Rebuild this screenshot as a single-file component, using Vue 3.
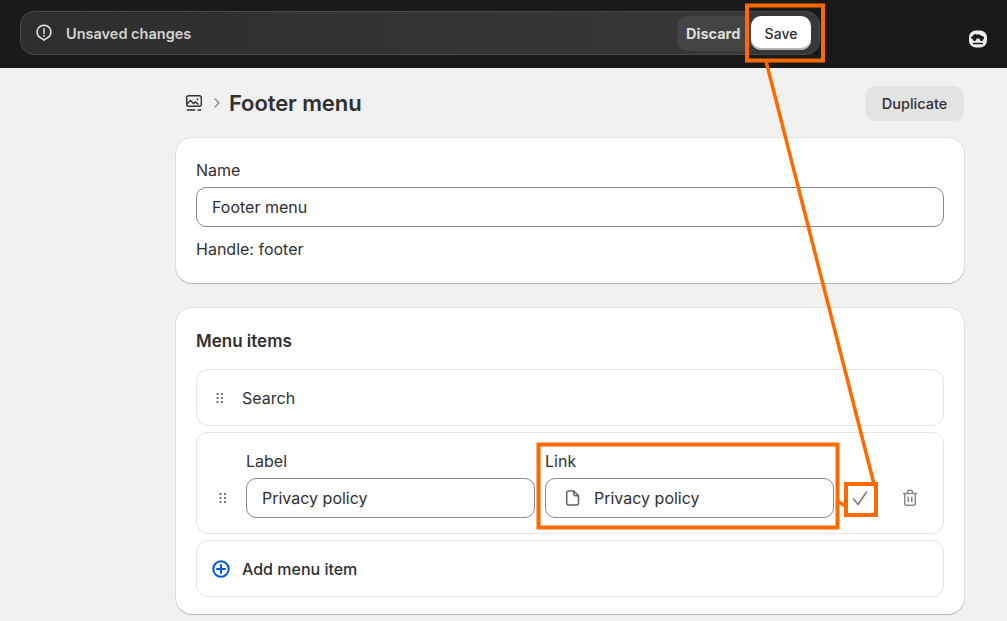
<template>
  <div class="page">
    <header class="topbar">
      <div class="save-bar">
        <svg class="alert-icon" viewBox="0 0 20 20" width="20" height="20" fill="none" stroke="#e3e3e3" stroke-width="1.5">
          <path d="M10 17.2l-1.9-1.5a6.9 6.9 0 1 1 3.8 0z" stroke-linejoin="round" />
          <path d="M10 5.8v4.6" stroke-linecap="round" />
          <circle cx="10" cy="12.9" r=".5" fill="#e3e3e3" stroke-width="1" />
        </svg>
        <span class="unsaved">Unsaved changes</span>
        <button class="btn-discard">Discard</button>
        <button class="btn-save">Save</button>
      </div>
      <svg class="avatar" viewBox="0 0 20 20" width="20" height="20">
        <rect x="1" y="1.5" width="18" height="17" rx="7" fill="#eee" />
        <path d="M3 8c2-1 3-3.500 5-3l1 1 1-1 2 1 4 2v1.500H3z" fill="#1a1a1a" />
        <circle cx="6.500" cy="10" r="2" fill="#1a1a1a" />
        <circle cx="13.500" cy="10" r="2" fill="#1a1a1a" />
        <path d="M5 14.500h10" stroke="#1a1a1a" stroke-width="1.500" />
      </svg>
    </header>

    <main class="content">
      <div class="title-row">
        <svg class="menu-icon" viewBox="0 0 20 20" width="20" height="20" fill="none" stroke="#303030" stroke-width="1.400">
          <rect x="2.700" y="2.700" width="14.600" height="10.600" rx="2" />
          <path d="M3 11l3.500-3.500 3 3 2-1.500 3 2.500" />
          <circle cx="13.500" cy="6.200" r=".9" fill="#303030" stroke="none" />
          <path d="M2.700 17h8.500M13.500 17h3.800" stroke-width="1.500" />
        </svg>
        <svg class="chevron" viewBox="0 0 8 12" width="8" height="12" fill="none" stroke="#8a8a8a" stroke-width="1.400">
          <path d="M2 2l4 4-4 4" stroke-linecap="round" stroke-linejoin="round" />
        </svg>
        <h1>Footer menu</h1>
        <button class="btn-duplicate">Duplicate</button>
      </div>

      <section class="card name-card">
        <label class="field-label">Name</label>
        <div class="input">Footer menu</div>
        <p class="handle">Handle: footer</p>
      </section>

      <section class="card items-card">
        <h2>Menu items</h2>
        <div class="item search-item">
          <svg class="grip" viewBox="0 0 8 10" width="8" height="10" fill="#616161">
            <template v-for="y in [1, 5, 9]" :key="y">
              <circle cx="1.500" :cy="y" r="1.100" />
              <circle cx="6" :cy="y" r="1.100" />
            </template>
          </svg>
          <span>Search</span>
        </div>

        <div class="item edit-item">
          <svg class="grip edit-grip" viewBox="0 0 8 10" width="8" height="10" fill="#616161">
            <template v-for="y in [1, 5, 9]" :key="y">
              <circle cx="1.500" :cy="y" r="1.100" />
              <circle cx="6" :cy="y" r="1.100" />
            </template>
          </svg>
          <div class="edit-field">
            <label class="field-label">Label</label>
            <div class="input">Privacy policy</div>
          </div>
          <div class="edit-field">
            <label class="field-label">Link</label>
            <div class="input link-input">
              <svg viewBox="0 0 20 20" width="20" height="20" fill="none" stroke="#616161" stroke-width="1.500" stroke-linejoin="round">
                <path d="M5.700 3h5.100l4.700 4.700v7.300a2 2 0 0 1-2 2H5.700a2 2 0 0 1-2-2V5a2 2 0 0 1 2-2z" />
                <path d="M10.800 3v3a1.700 1.700 0 0 0 1.700 1.700h3" />
              </svg>
              <span>Privacy policy</span>
            </div>
          </div>
          <svg class="check" viewBox="0 0 20 20" width="20" height="20" fill="none" stroke="#7a7a7a" stroke-width="1.500">
            <path d="M3.500 11l4.500 5.500L16.500 4" stroke-linecap="round" stroke-linejoin="round" />
          </svg>
          <svg class="trash" viewBox="0 0 20 20" width="20" height="20" fill="none" stroke="#8a8a8a" stroke-width="1.500">
            <path d="M3 5.500h14M7.500 5V4a1.700 1.700 0 0 1 1.700-1.700h1.600A1.700 1.700 0 0 1 12.500 4v1" />
            <path d="M4.700 5.500v9.800a2 2 0 0 0 2 2h6.600a2 2 0 0 0 2-2V5.500M8.200 8.500v5.800M11.800 8.500v5.800" />
          </svg>
        </div>

        <div class="item add-item">
          <svg viewBox="0 0 20 20" width="20" height="20" fill="none" stroke="#005bd3" stroke-width="2">
            <circle cx="10" cy="10" r="7.700" />
            <path d="M10 6v8M6 10h8" stroke-linecap="round" />
          </svg>
          <span>Add menu item</span>
        </div>
      </section>
    </main>

    <!-- orange tutorial marks drawn over the screenshot -->
    <svg class="marks" viewBox="0 0 1007 621" width="1007" height="621" fill="none" stroke="#ff6a00">
      <rect x="747" y="5.500" width="76" height="55" stroke-width="4" />
      <rect x="538.500" y="444.500" width="299" height="83" stroke-width="4" />
      <rect x="846" y="484" width="30" height="31" stroke-width="4" />
      <path d="M766 61l108 423" stroke-width="3.500" />
      <path d="M838 501l8 6" stroke-width="3" />
    </svg>
  </div>
</template>

<script setup>
</script>

<style>
html,
body {
  margin: 0;
  background: #f1f1f1;
}
</style>

<style scoped>
.page {
  position: relative;
  width: 1007px;
  height: 621px;
  overflow: hidden;
  background: #f1f1f1;
  color: #303030;
  font-family: Inter, "Liberation Sans", sans-serif;
  font-size: 16px;
}

.topbar {
  display: flex;
  align-items: center;
  height: 68px;
  padding: 0 20px;
  box-sizing: border-box;
  background: #1a1a1a;
}

.save-bar {
  display: flex;
  align-items: center;
  width: 800px;
  height: 44px;
  margin-top: -2px;
  padding: 0 4px 0 13px;
  box-sizing: border-box;
  border: 1px solid #4a4a4a;
  border-radius: 14px;
  background: linear-gradient(90deg, #2e2e2e, #383838);
}

.unsaved {
  flex: 1;
  margin-left: 12px;
  color: #d4d4d4;
  font-size: 14.500px;
  font-weight: 600;
}

button {
  border: none;
  font-family: inherit;
  cursor: pointer;
}

.btn-discard {
  height: 35px;
  width: 75px;
  padding: 0 0 0 9px;
  border-radius: 10px;
  background: #444;
  color: #dedede;
  font-size: 14.500px;
  font-weight: 700;
  text-align: left;
}

.btn-save {
  width: 60px;
  height: 34px;
  margin: 0 4px 0 -1px;
  border-radius: 10px;
  background: #fff;
  box-shadow: inset 0 -2px 0 #b5b5b5;
  color: #303030;
  font-size: 14px;
  font-weight: 500;
}

.avatar {
  margin-left: auto;
  margin-right: -1px;
  margin-top: 9px;
}

.content {
  width: 788px;
  margin-left: 176px;
}

.title-row {
  display: flex;
  align-items: center;
  height: 70px;
}

.menu-icon {
  margin-left: 8px;
}

.chevron {
  margin: 0 5px 0 9px;
}

h1 {
  flex: 1;
  margin: 0 0 0 3px;
  font-size: 22px;
  font-weight: 600;
  letter-spacing: -0.1px;
}

.btn-duplicate {
  width: 99px;
  height: 35px;
  border-radius: 10px;
  background: #e3e3e3;
  color: #303030;
  font-size: 14.500px;
  font-weight: 500;
}

.card {
  box-sizing: border-box;
  border-radius: 16px;
  background: #fff;
  box-shadow: 0 1px 1px rgba(0, 0, 0, 0.2), 0 0 0 1px rgba(0, 0, 0, 0.06);
}

.name-card {
  height: 145px;
  padding: 22px 20px 0;
}

.field-label {
  display: block;
  font-size: 16px;
  line-height: 20px;
}

.input {
  display: flex;
  align-items: center;
  height: 40px;
  margin-top: 7px;
  padding: 0 15px;
  box-sizing: border-box;
  border: 1px solid #8a8a8a;
  border-radius: 10px;
  background: #fdfdfd;
  font-size: 16px;
}

.handle {
  margin: 12px 0 0;
  line-height: 20px;
}

.items-card {
  height: 306px;
  margin-top: 25px;
  padding: 23px 20px 0;
}

h2 {
  margin: 0 0 18px;
  font-size: 17px;
  font-weight: 600;
  line-height: 20px;
}

.item {
  display: flex;
  align-items: center;
  box-sizing: border-box;
  margin-bottom: 6px;
  border: 1px solid #e3e3e3;
  border-radius: 12px;
  background: #fff;
}

.search-item {
  height: 57px;
  padding-left: 19px;
}

.search-item span {
  margin-left: 18px;
}

.edit-item {
  align-items: flex-end;
  height: 102px;
  padding-bottom: 15px;
}

.edit-grip {
  margin: 0 19px 15px 22px;
}

.edit-field {
  width: 289px;
  margin-right: 10px;
}

.link-input span {
  margin-left: 11px;
}

.link-input {
  padding-left: 17px;
}

.check {
  margin: 0 30px 10px 6px;
}

.trash {
  margin-bottom: 10px;
}

.add-item {
  height: 57px;
  padding-left: 14px;
  font-weight: 500;
}

.add-item span {
  margin-left: 11px;
}

.marks {
  position: absolute;
  top: 0;
  left: 0;
  pointer-events: none;
}
</style>
